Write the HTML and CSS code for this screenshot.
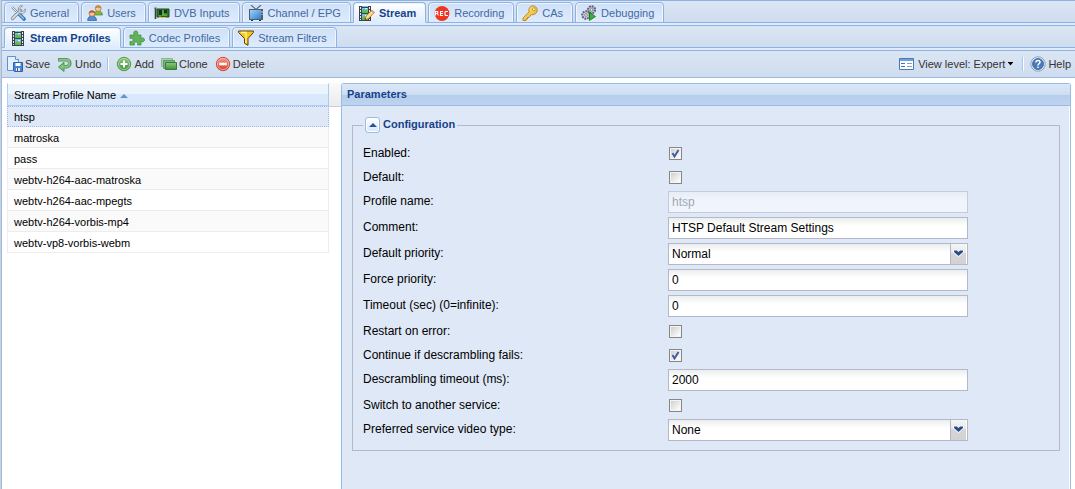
FILE: index.html
```html
<!DOCTYPE html>
<html lang="en">
<head>
<meta charset="utf-8">
<title>Stream Profiles</title>
<link rel="stylesheet" href="styles.css">
</head>
<body>
<svg class="defs" width="0" height="0" aria-hidden="true">
  <defs>
    <linearGradient id="green" x1="0" y1="0" x2="0" y2="1"><stop offset="0" stop-color="#8fcb80"/><stop offset="1" stop-color="#3f8f3a"/></linearGradient>
    <linearGradient id="gold" x1="0" y1="0" x2="1" y2="1"><stop offset="0" stop-color="#fff08a"/><stop offset="1" stop-color="#e9a821"/></linearGradient>
    <linearGradient id="sky" x1="0" y1="0" x2="1" y2="1"><stop offset="0" stop-color="#9fd0fa"/><stop offset="1" stop-color="#2f7fcf"/></linearGradient>
    <linearGradient id="red" x1="0" y1="0" x2="0" y2="1"><stop offset="0" stop-color="#f59a8c"/><stop offset="1" stop-color="#d93a2b"/></linearGradient>
    <symbol id="film" viewBox="0 0 16 16">
      <path d="M2 1h12v15H2z" fill="#3c4046"/>
      <path d="M5 1h6v1H5zM5 3h6v5H5zM5 9h6v6H5z" fill="#6cc0f4"/>
      <path d="M5 6l2-2 2 2 2-1v3H5zM5 13l2-2 2 2 2-1v3H5z" fill="#5cbb45"/>
      <path d="M8 3h2v1H8zM8 10h2v1H8z" fill="#eef48f"/>
      <path d="M3 2h1v2H3zM3 5h1v2H3zM3 8h1v2H3zM3 11h1v2H3zM3 14h1v1H3zM12 2h1v2h-1zM12 5h1v2h-1zM12 8h1v2h-1zM12 11h1v2h-1zM12 14h1v1h-1z" fill="#e8ecf0"/>
    </symbol>
  </defs>
</svg>
<div class="app">
  <nav class="strip" aria-label="Sections">
    <button class="tab"><svg class="icon" viewBox="0 0 16 16"><path d="M2 2l7 7" stroke="#7d8894" stroke-width="2"/><path d="M2 2l7 7" stroke="#eef2f6" stroke-width="1"/><path d="M9 9l5 5" stroke="#2f74b8" stroke-width="3.6" stroke-linecap="round"/><path d="M9.5 9.5l4 4" stroke="#8fc1ee" stroke-width="1.4" stroke-linecap="round"/><path d="M2.5 13.500l8-8" stroke="#7f8890" stroke-width="3.2" stroke-linecap="round"/><path d="M2.500 13.500l8-8" stroke="#e6e9ec" stroke-width="1.700" stroke-linecap="round"/><path d="M12.500.8L10 3.300v3L13 6.400l2.400-2.600-.2 3-2.700 2-3-.6-1.500-2 .7-3.800L10.500.6z" fill="#dfe3e7" stroke="#7f8890" stroke-width=".8"/></svg>General</button>
    <button class="tab"><svg class="icon" viewBox="0 0 16 16"><path d="M7 10c0-3 2-4 4-4s4.500 1 4.500 4z" fill="#7dbb3c" stroke="#4b8a22" stroke-width=".7"/><circle cx="11.200" cy="3.500" r="2.900" fill="#f6c795" stroke="#b06a2a" stroke-width=".7"/><path d="M8.200 3.500C8 0 14.500 0 14.300 3.500 12.500 3 10.500 1.800 8.200 3.500z" fill="#c47a2c"/><path d="M.6 15.500c0-3.200 2-4.500 4.400-4.500s4.500 1.300 4.500 4.500z" fill="#4e8fd8" stroke="#2a5fa8" stroke-width=".7"/><circle cx="5" cy="8.500" r="2.900" fill="#f6c795" stroke="#b0502a" stroke-width=".7"/><path d="M2 8.500c0-3.800 6.200-3.800 6 0C6.500 8 4.500 6.800 2 8.500z" fill="#b5532a"/></svg>Users</button>
    <button class="tab"><svg class="icon" viewBox="0 0 16 16"><path d="M1.500 3v11" stroke="#3a3f3a" stroke-width="1.600"/><path d="M0 3h3" stroke="#777"/><path d="M3 4h12v8H3z" fill="#2f7a2f" stroke="#1d4a1d"/><path d="M5 5h3v5H5zM10 5h3v3h-3z" fill="#173417"/><path d="M9 5v5M5 11h2M8 10h5" stroke="#7ed05a"/><path d="M5 12.500h7" stroke="#e0c04a"/></svg>DVB Inputs</button>
    <button class="tab"><svg class="icon" viewBox="0 0 16 16"><path d="M3 0l5 4.500L13 0" fill="none" stroke="#5f6b78" stroke-width="1.200"/><path d="M1 4h14v11H1z" fill="#535d68"/><path d="M2 5h11v9H2z" fill="url(#sky)"/><path d="M13.500 6h1v2h-1zM13.500 9h1v1h-1z" fill="#cfd8e0"/><path d="M3 15h2v1H3zM11 15h2v1h-2z" fill="#333"/></svg>Channel / EPG</button>
    <button class="tab active"><svg class="icon" viewBox="0 0 16 16"><use href="#film" x="-2" width="16" height="16"/><path d="M5.500 15L7 11l6-6 2.500 2.500-6 6z" fill="#f8cf6c" stroke="#b87c32" stroke-width=".8"/><path d="M8 12.500l6-6" stroke="#fff0a8"/><path d="M12 6l1.300-1.300 2.500 2.500L14.500 8.500z" fill="#ef9a7a"/><path d="M5.500 15l.8-2 1.300 1.200z" fill="#4a3018"/></svg>Stream</button>
    <button class="tab"><svg class="icon" viewBox="0 0 16 16"><circle cx="8" cy="8.500" r="7.400" fill="#ef3420"/><path d="M1.500 10.500v-4h2l.5.700-.6 1.300L4.500 10.500M2 8.500h1.500M9 6.500H6.500v4H9M6.500 8.500H9M14 6.500h-2.500L11 7v3l.5.500H14" fill="none" stroke="#fff" stroke-width="1.100"/></svg>Recording</button>
    <button class="tab"><svg class="icon" viewBox="0 0 16 16"><path d="M7.200 7L1 13v2.500h3V14h1.500v-1.500H7L9.300 9.500c3 .8 5.900-1.300 5.900-4.300C15.200 2.500 13 .8 10.800.8 8 .8 6 3.800 7.200 7z" fill="url(#gold)" stroke="#b87f16" stroke-width=".9"/><circle cx="11.800" cy="4.200" r="1.400" fill="#fff" stroke="#b87f16" stroke-width=".8"/></svg>CAs</button>
    <button class="tab"><svg class="icon" viewBox="0 0 16 16"><circle cx="10.500" cy="4.800" r="3.600" fill="#b9b9cc" stroke="#5e5e76" stroke-width="2" stroke-dasharray="1.800 1"/><circle cx="10.500" cy="4.800" r="1.200" fill="#fff" stroke="#66667e" stroke-width=".7"/><circle cx="5" cy="10" r="3.800" fill="#c9c9da" stroke="#5e5e76" stroke-width="2" stroke-dasharray="1.800 1"/><circle cx="5" cy="10" r="1.300" fill="#fff" stroke="#66667e" stroke-width=".7"/><path d="M8.500 7.500l6 4-6 4z" fill="#2fb52f" stroke="#147014" stroke-width=".8"/></svg>Debugging</button>
  </nav>
  <nav class="strip" aria-label="Stream pages">
    <button class="tab active"><svg class="icon"><use href="#film"/></svg>Stream Profiles</button>
    <button class="tab"><svg class="icon" viewBox="0 0 16 16"><path d="M1 5h4.300C4 2.500 5 1 6.700 1s2.800 1.500 1.500 4H12v3.500c2-1.200 3.500-.3 3.500 1.300S14 12.500 12 11.200V15H8.500c.8-2-.2-3-1.500-3s-2.300 1-1.500 3H1v-3.700c2 .8 3-.2 3-1.500S3 7.600 1 8.500z" fill="#62b25a" stroke="#43903d" stroke-width=".8"/></svg>Codec Profiles</button>
    <button class="tab"><svg class="icon" viewBox="0 0 16 16"><path d="M.6 1h14.800v1.500L10 8.500v6.800l-3.500-2V8.500L.6 2.500z" fill="#f7c81c" stroke="#5c4108" stroke-width="1"/><path d="M3 2.500h5L8 8v5" fill="none" stroke="#fff3a0" stroke-width="1.300"/></svg>Stream Filters</button>
  </nav>
  <div class="toolbar" role="toolbar">
    <button class="tool"><svg class="icon" viewBox="0 0 16 16"><path d="M.5.500h8l3 3v11H.500z" fill="#e4f0fd" stroke="#5c93d4"/><path d="M8.500.500v3h3" fill="#fff" stroke="#5c93d4"/><path d="M6.500 6.500h9v9h-8l-1-1z" fill="#4b86d6" stroke="#2c62ad"/><path d="M8.500 7h5v3h-5z" fill="#fff"/><path d="M9 12h4v3H9z" fill="#e6eedb"/><path d="M10 12h1v3h-1z" fill="#2c62ad"/></svg>Save</button>
    <button class="tool"><svg class="icon" viewBox="0 0 16 16"><path d="M1 3.800h8.500c4.300 0 4.300 6.900 0 6.900H6" fill="none" stroke="#4b9155" stroke-width="3.600"/><path d="M7 6.300v9.200L1.500 11z" fill="#7fbf83" stroke="#4b9155"/><path d="M1.600 3.800h8c3.800 0 3.800 6.900 0 6.900H5" fill="none" stroke="#86c48a" stroke-width="1.900"/></svg>Undo</button>
    <span class="separator"></span>
    <button class="tool"><svg class="icon" viewBox="0 0 16 16"><circle cx="8" cy="8" r="6.700" fill="url(#green)" stroke="#4f9c4b"/><circle cx="8" cy="8" r="5.600" fill="none" stroke="#b5deab" stroke-width=".8"/><path d="M8 4.500v7M4.500 8h7" stroke="#fff" stroke-width="2"/></svg>Add</button>
    <button class="tool"><svg class="icon" viewBox="0 0 16 16"><path d="M.500 2.500h11v8H.500z" fill="#a8cdb0" stroke="#8cb898"/><path d="M2.500 4.500h11v8h-11z" fill="#7db384" stroke="#5f9a68"/><path d="M4.500 6.500h11v7h-11z" fill="url(#green)" stroke="#357e38"/></svg>Clone</button>
    <button class="tool"><svg class="icon" viewBox="0 0 16 16"><circle cx="8" cy="8" r="6.700" fill="url(#red)" stroke="#cf4a3c"/><circle cx="8" cy="8" r="5.600" fill="none" stroke="#f8b9ae" stroke-width=".8"/><path d="M4.200 8h7.600" stroke="#fff" stroke-width="2.600"/></svg>Delete</button>
    <span class="fill"></span>
    <button class="tool"><svg class="icon" viewBox="0 0 16 16"><path d="M.500 2.500h14v11H.500z" fill="#fff" stroke="#4a79b8"/><path d="M1 3h13v2H1z" fill="#6fa0dc"/><path d="M2 7.500h4M2 10.500h4" stroke="#3f73b5"/><path d="M8 7h5v1H8zM8 10h5v1H8z" fill="#7f9fc8"/></svg>View level: Expert<svg class="caret" viewBox="0 0 7 4"><path d="M1 0h5v1H5.500L3.500 3.500 1.500 1H1z" fill="#000"/></svg></button>
    <span class="separator"></span>
    <button class="tool"><svg class="icon" viewBox="0 0 16 16"><circle cx="8" cy="8" r="7.200" fill="#eef3fa" stroke="#7f9fc4"/><circle cx="8" cy="8" r="5.500" fill="#4a7ab8" stroke="#33619d" stroke-width=".8"/><path d="M5.900 6.500C6 3.800 10 4 10 6.200 10 7.800 8 7.800 8 9.500M8 10.500V12" fill="none" stroke="#fff" stroke-width="1.500"/></svg>Help</button>
  </div>
  <main class="content">
    <section class="list">
      <table class="profiles">
        <thead><tr><th scope="col">Stream Profile Name<svg class="sort" viewBox="0 0 8 4"><path d="M4 0l4 4H0z" fill="#6593cf"/></svg></th></tr></thead>
        <tbody>
          <tr class="selected"><td>htsp</td></tr>
          <tr><td>matroska</td></tr>
          <tr><td>pass</td></tr>
          <tr><td>webtv-h264-aac-matroska</td></tr>
          <tr><td>webtv-h264-aac-mpegts</td></tr>
          <tr><td>webtv-h264-vorbis-mp4</td></tr>
          <tr><td>webtv-vp8-vorbis-webm</td></tr>
        </tbody>
      </table>
      <div class="gutter"></div>
    </section>
    <section class="panel">
      <h2 class="panel-title">Parameters</h2>
      <form class="panel-body">
        <fieldset class="group">
          <legend><button type="button" class="toggle" aria-label="Collapse"><svg viewBox="0 0 8 4" width="8" height="4"><path d="M4 0l4 4H0z" fill="#2a4fa0"/></svg></button>Configuration</legend>
          <div class="row"><label for="enabled">Enabled:</label><input class="check" id="enabled" type="checkbox" checked></div>
          <div class="row"><label for="default">Default:</label><input class="check" id="default" type="checkbox"></div>
          <div class="row"><label for="name">Profile name:</label><input class="text" id="name" type="text" value="htsp" disabled></div>
          <div class="row"><label for="comment">Comment:</label><input class="text" id="comment" type="text" value="HTSP Default Stream Settings"></div>
          <div class="row"><label for="priority">Default priority:</label><select class="text" id="priority"><option>Normal</option></select></div>
          <div class="row"><label for="force">Force priority:</label><input class="text" id="force" type="text" value="0"></div>
          <div class="row"><label for="timeout">Timeout (sec) (0=infinite):</label><input class="text" id="timeout" type="text" value="0"></div>
          <div class="row"><label for="restart">Restart on error:</label><input class="check" id="restart" type="checkbox"></div>
          <div class="row"><label for="continue">Continue if descrambling fails:</label><input class="check" id="continue" type="checkbox" checked></div>
          <div class="row"><label for="descramble">Descrambling timeout (ms):</label><input class="text" id="descramble" type="text" value="2000"></div>
          <div class="row"><label for="switch">Switch to another service:</label><input class="check" id="switch" type="checkbox"></div>
          <div class="row"><label for="video">Preferred service video type:</label><select class="text" id="video"><option>None</option></select></div>
        </fieldset>
      </form>
    </section>
  </main>
</div>
</body>
</html>
```
FILE: styles.css
```css
* { box-sizing: border-box; }
body {
  margin: 0;
  background: #d0d0d0;
  font: 11px/14px "Liberation Sans", Arial, sans-serif;
  color: #000;
}
button, input, select { font: inherit; color: inherit; margin: 0; }
.defs { position: absolute; }
.app {
  display: flex;
  flex-direction: column;
  min-height: 100vh;
  margin-left: 1px;
  border-left: 1px solid #99bbe8;
  background: #fff;
}
.icon { width: 16px; height: 16px; flex: none; }

.strip {
  display: flex;
  align-items: flex-end;
  gap: 2px;
  height: 25px;
  padding: 0 2px 2px;
  border-top: 1px solid #8db2e3;
  background:
    linear-gradient(#deecfd, #deecfd) bottom / 100% 2px no-repeat,
    linear-gradient(#8db2e3, #8db2e3) bottom 2px left 0 / 100% 1px no-repeat,
    linear-gradient(#dbe6f4, #cddbed);
}
.tab {
  display: flex;
  align-items: center;
  gap: 4px;
  height: 21px;
  padding: 1px 9px 0 5px;
  border: 1px solid #8db2e3;
  border-radius: 4px 4px 0 0;
  background: linear-gradient(#cfe0f7, #deebfc);
  box-shadow: inset 1px 1px #edf5ff, inset -1px 0 #edf5ff;
  color: #416aa3;
  white-space: nowrap;
}
.tab.active {
  border-bottom-color: #deecfd;
  background: linear-gradient(#fff, #deecfd);
  color: #15428b;
  font-weight: bold;
}

.toolbar {
  display: flex;
  align-items: center;
  height: 28px;
  padding: 0 4px 0 3px;
  border-top: 1px solid #8db2e3;
  border-bottom: 1px solid #99bbe8;
  background: linear-gradient(#dbe6f4, #cedcee);
  color: #333;
}
.tool {
  display: flex;
  align-items: center;
  gap: 2px;
  padding: 0 5px 0 2px;
  border: 0;
  background: none;
  white-space: nowrap;
}
.separator {
  width: 2px;
  height: 14px;
  margin: 0 5px 0 1px;
  border-left: 1px solid #98c8ff;
  border-right: 1px solid #fff;
}
.caret { width: 7px; height: 4px; margin-left: -1px; }
.fill { flex: 1; }
.fill ~ .tool { gap: 3px; }
.fill ~ .separator { margin: 0 4px 0 3px; }
.fill ~ .tool:last-child { gap: 2px; padding-right: 0; }

.content { display: flex; flex: 1; padding: 5px 4px 0 5px; }
.list { display: flex; flex: 0 1 334px; align-items: flex-start; }
.gutter {
  flex: 1;
  height: 24px;
  border-bottom: 1px solid #d0d0d0;
  background: linear-gradient(#fafafa, #ebebeb);
}
.profiles { width: 322px; border-collapse: separate; border-spacing: 0; }
.profiles th {
  height: 23px;
  padding: 0 6px;
  border: 1px solid #aaccf6;
  border-top-color: #fff;
  background: linear-gradient(#ebf3fd 10px, #d9e8fb 10px);
  font-weight: normal;
  text-align: left;
}
.sort { width: 8px; height: 4px; margin: 0 0 1px 4px; }
.profiles td {
  height: 21px;
  padding: 0 6px;
  border: 1px solid #ededed;
  border-top-color: #fff;
}
.profiles tr:nth-child(even) td { background: #fafafa; border-top-color: #fafafa; }
.profiles .selected td { border: 1px dotted #a3bae9; background: #dfe8f6; }

.panel {
  display: flex;
  flex: 1;
  flex-direction: column;
  border: 1px solid #99bbe8;
  border-bottom: 0;
  border-radius: 3px 3px 0 0;
}
.panel-title {
  height: 22px;
  margin: 0;
  padding: 3px 5px;
  border-bottom: 1px solid #99bbe8;
  background: linear-gradient(#dae7f6, #cddef3 11px, #b6cdeb 11px, #bdd3ef);
  color: #15428b;
  font-size: 11px;
  line-height: 15px;
}
.panel-body { flex: 1; padding: 11px 9px 10px 10px; background: #dfe8f6; border-right: 1px solid #fff; }
.group {
  margin: 0;
  padding: 10px 10px 9px;
  border: 1px solid #b5b8c8;
}
.group legend {
  display: flex;
  align-items: flex-start;
  gap: 3px;
  height: 16px;
  padding: 0 2px;
  color: #15428b;
  font-weight: bold;
}
.toggle {
  display: flex;
  align-items: center;
  justify-content: center;
  width: 15px;
  height: 16px;
  padding: 0;
  border: 1px solid #99bbe8;
  border-radius: 3px;
  background: linear-gradient(#fff, #d5e6fa);
  box-shadow: inset 0 0 0 1px #fff;
}
.row {
  display: flex;
  align-items: flex-start;
  margin-bottom: 4px;
  font-size: 12px;
}
.row:last-child { margin-bottom: 0; }
.row label { width: 305px; line-height: 20px; }
.text {
  width: 300px;
  height: 22px;
  padding: 1px 3px;
  border: 1px solid #b5b8c8;
  border-radius: 0;
  background: linear-gradient(#eceeee, #fff 8px);
}
.text:disabled { background: linear-gradient(#e7edf4, #f0f5fd 8px); border-color: #c5cbdc; color: #a3a8b0; }
select.text {
  appearance: none;
  background:
    url("data:image/svg+xml,%3Csvg xmlns='http://www.w3.org/2000/svg' width='17' height='20'%3E%3Cdefs%3E%3ClinearGradient id='g' x2='0' y2='1'%3E%3Cstop stop-color='%23f6f6f6'/%3E%3Cstop offset='.45' stop-color='%23e6e6e6'/%3E%3Cstop offset='.45' stop-color='%23d6d6d6'/%3E%3Cstop offset='1' stop-color='%23d2d2d2'/%3E%3C/linearGradient%3E%3C/defs%3E%3Cpath d='M0 0h17v20H0z' fill='url(%23g)'/%3E%3Cpath d='M.5 0v20' stroke='%23b5b8c8'/%3E%3Cpath d='M16.500 0v20' stroke='%23fff'/%3E%3Cpath d='M4 6.500h3l1.500 1.500L10 6.500h3v1.500l-4.500 4L4 8z' fill='%232a4a8a' stroke='%23fff' stroke-width='1.600' paint-order='stroke'/%3E%3C/svg%3E") right center no-repeat,
    linear-gradient(#eceeee, #fff 8px);
}
.check {
  appearance: none;
  width: 13px;
  height: 13px;
  margin: 4px 1px 3px;
  border: 1px solid #868686;
  background: linear-gradient(135deg, #d0d0d0, #fff) center / 9px 9px no-repeat #f4f4f4;
}
.check:checked {
  background:
    url("data:image/svg+xml,%3Csvg xmlns='http://www.w3.org/2000/svg' width='11' height='11'%3E%3Cpath d='M2.500 5l2 3.500L8.500 2' fill='none' stroke='%233c5a9c' stroke-width='1.900'/%3E%3C/svg%3E") center no-repeat,
    linear-gradient(135deg, #d0d0d0, #fff) center / 9px 9px no-repeat #f4f4f4;
}
```
